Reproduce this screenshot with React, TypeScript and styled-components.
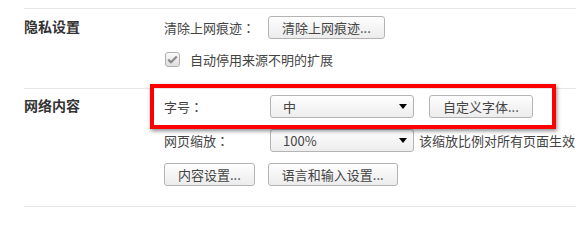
import styled, { createGlobalStyle } from "styled-components";

const GlobalStyle = createGlobalStyle`
    html, body {
        margin: 0;
        background: #fff;
    }
    body {
        font-family: "Noto Sans CJK SC", "Liberation Sans", sans-serif;
        font-size: 13px;
        color: #444;
    }
`;

export default function App() {
    return (
        <>
            <GlobalStyle />
            <Page>
                <Section>
                    <Title>隐私设置</Title>
                    <Content>
                        <Row>
                            <Label>清除上网痕迹<Colon>：</Colon></Label>
                            <Button $shift={-2}>清除上网痕迹...</Button>
                        </Row>
                        <Row>
                            <CheckLabel>
                                <CheckBox>
                                    <svg width="11" height="9" viewBox="0 0 11 9">
                                        <path d="M1.2 4.6 L4 7.3 L9.8 1.4" fill="none" stroke="#8a8a8a" strokeWidth="2.2" />
                                    </svg>
                                </CheckBox>
                                自动停用来源不明的扩展
                            </CheckLabel>
                        </Row>
                    </Content>
                </Section>
                <Section $last>
                    <Title>网络内容</Title>
                    <Content $gap={11}>
                        <Row>
                            <Label>字号<Colon>：</Colon></Label>
                            <Select>
                                <span>中</span>
                                <Arrow />
                            </Select>
                            <Button $shift={15}>自定义字体...</Button>
                        </Row>
                        <Row>
                            <Label>网页缩放<Colon>：</Colon></Label>
                            <Select>
                                <span>100%</span>
                                <Arrow />
                            </Select>
                            <Note>该缩放比例对所有页面生效</Note>
                        </Row>
                        <Row>
                            <Button>内容设置...</Button>
                            <Button $shift={13}>语言和输入设置...</Button>
                        </Row>
                    </Content>
                </Section>
                <Highlight />
            </Page>
        </>
    );
}

const Page = styled.div`
    position: relative;
    width: 576px;
    height: 217px;
    overflow: hidden;
    padding: 8px 0 0 24px;
    box-sizing: border-box;
`;

const Section = styled.section<{ $last?: boolean }>`
    display: flex;
    border-top: 1px solid #e6e6e6;
    border-bottom: ${(p) => (p.$last ? "1px solid #e6e6e6" : "none")};
    padding: ${(p) => (p.$last ? "6px 0 20px" : "7px 0 18px")};
`;

const Title = styled.h3`
    width: 140px;
    flex-shrink: 0;
    margin: 0;
    height: 23px;
    line-height: 21px;
    font-size: 14px;
    font-weight: bold;
    color: #333;
`;

const Content = styled.div<{ $gap?: number }>`
    display: flex;
    flex-direction: column;
    gap: ${(p) => p.$gap ?? 8}px;
`;

const Row = styled.div`
    display: flex;
    align-items: center;
    height: 23px;
    white-space: nowrap;
`;

const Label = styled.span`
    width: 106px;
    flex-shrink: 0;
    color: #444;
`;

const Colon = styled.span`
    font-family: "Noto Sans CJK JP", sans-serif;
`;

const Button = styled.button<{ $shift?: number }>`
    height: 23px;
    margin-left: ${(p) => p.$shift ?? 0}px;
    padding: 0 13px;
    border: 1px solid #b4b4b4;
    border-radius: 3px;
    background: linear-gradient(#fefefe, #ececec);
    font-family: inherit;
    font-size: 13px;
    color: #444;
    line-height: 21px;
    white-space: nowrap;
`;

const Select = styled.div`
    display: flex;
    align-items: center;
    justify-content: space-between;
    box-sizing: border-box;
    width: 144px;
    height: 23px;
    padding: 0 6px 0 12px;
    border: 1px solid #b4b4b4;
    border-radius: 3px;
    background: linear-gradient(#fefefe, #ededed);
    color: #444;
`;

const Arrow = styled.span`
    width: 0;
    height: 0;
    border-left: 4px solid transparent;
    border-right: 4px solid transparent;
    border-top: 5px solid #000;
`;

const Note = styled.span`
    margin-left: 5px;
    color: #444;
`;

const CheckLabel = styled.label`
    display: flex;
    align-items: center;
    gap: 10px;
    color: #444;
    padding-top: 2px;
`;

const CheckBox = styled.span`
    display: flex;
    align-items: center;
    justify-content: center;
    width: 13px;
    height: 13px;
    margin-left: 1px;
    border: 1px solid #b0b0b0;
    border-radius: 3px;
    background: linear-gradient(#fafafa, #dedede);
`;

const Highlight = styled.div`
    position: absolute;
    left: 150px;
    top: 84px;
    width: 406px;
    height: 45px;
    box-sizing: border-box;
    border: 4px solid #ff0000;
    box-shadow: 1px 2px 4px rgba(0, 0, 0, 0.45);
    pointer-events: none;
`;
